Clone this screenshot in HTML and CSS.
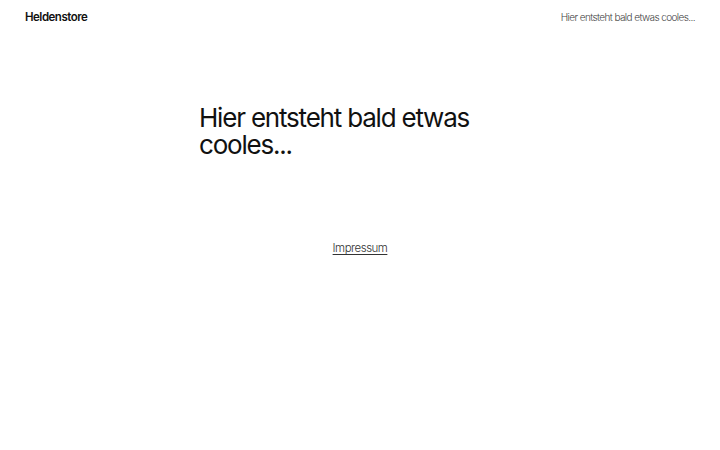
FILE: index.html
```html
<!DOCTYPE html>
<html lang="de">
<head>
<meta charset="utf-8">
<title>Heldenstore</title>
<link rel="stylesheet" href="styles.css">
</head>
<body>
<header class="site-header">
  <div class="brand">Heldenstore</div>
  <div class="tagline">Hier entsteht bald etwas cooles...</div>
</header>
<main class="main">
  <section class="hero">
    <h1 class="hero-title">Hier entsteht bald etwas cooles...</h1>
  </section>
  <footer class="site-footer">
    <a class="footer-link" href="#">Impressum</a>
  </footer>
</main>
</body>
</html>
```
FILE: styles.css
```css
html, body {
  margin: 0;
  padding: 0;
  background: #ffffff;
  color: #111111;
  font-family: Inter, "Noto Sans", "Liberation Sans", sans-serif;
}
.site-header {
  display: flex;
  justify-content: space-between;
  align-items: center;
  padding: 9px 25px 0 25px;
  height: 16px;
}
.brand {
  font-size: 11.5px;
  font-weight: 600;
  letter-spacing: -0.5px;
  color: #111;
}
.tagline {
  font-size: 10px;
  font-weight: 300;
  color: #444;
  letter-spacing: -0.6px;
}
.main {
  display: flex;
  flex-direction: column;
  align-items: center;
}
.hero {
  width: 322px;
  padding-top: 79px;
}
.hero-title {
  margin: 0;
  font-size: 26px;
  font-weight: 400;
  line-height: 27px;
  letter-spacing: -1.2px;
  color: #111;
}
.site-footer {
  padding-top: 78px;
}
.footer-link {
  font-size: 11.5px;
  font-weight: 300;
  color: #333;
  letter-spacing: -0.5px;
  text-decoration: underline;
  text-underline-offset: 2px;
}
```
